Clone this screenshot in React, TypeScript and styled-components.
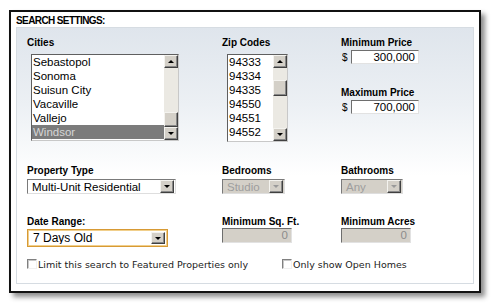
import React from "react";
import styled, { createGlobalStyle } from "styled-components";

const GlobalStyle = createGlobalStyle`
  html, body { margin: 0; padding: 0; background: #fff; }
  body { font-family: "Liberation Sans", Arial, sans-serif; }
`;

const Page = styled.div`
  width: 498px;
  height: 303px;
  padding: 10px 0 0 9px;
  box-sizing: border-box;
`;

const Frame = styled.div`
  width: 472px;
  height: 283px;
  box-sizing: border-box;
  border: 2px solid #111;
  background: #fff;
  box-shadow: 4px 4px 5px rgba(0, 0, 0, 0.45);
  padding: 0 5px 7px 5px;
  display: flex;
  flex-direction: column;
`;

const Title = styled.div`
  padding-top: 3px;
  font-size: 10px;
  line-height: 12px;
  font-weight: bold;
  letter-spacing: -0.6px;
  color: #000;
`;

const Panel = styled.div`
  flex: 1;
  border: 1px solid #d6dce2;
  background: linear-gradient(to bottom, #dfe5ec 0%, #ecf0f4 30%, #ffffff 58%);
  padding: 9px 0 0 10px;
`;

const Row = styled.div<{ mt?: number }>`
  display: grid;
  grid-template-columns: 195px 119px 1fr;
  align-items: start;
  margin-top: ${(p) => p.mt || 0}px;
`;

const Field = styled.div`
  display: flex;
  flex-direction: column;
  align-items: flex-start;
`;

const Label = styled.div<{ mt?: number }>`
  font-size: 10px;
  line-height: 12px;
  font-weight: bold;
  color: #000;
  margin-top: ${(p) => p.mt || 0}px;
`;

/* ---------- list box ---------- */

const ListBox = styled.div<{ w: number; h: number; ml: number; mt: number }>`
  width: ${(p) => p.w}px;
  height: ${(p) => p.h}px;
  margin: ${(p) => p.mt}px 0 0 ${(p) => p.ml}px;
  box-sizing: border-box;
  border: 1px solid;
  border-color: #5f5f5f #c8c8c8 #c8c8c8 #5f5f5f;
  background: #fff;
  display: flex;
  overflow: hidden;
`;

const Items = styled.div`
  flex: 1;
  overflow: hidden;
`;

const Item = styled.div<{ selected?: boolean }>`
  font-size: 11.5px;
  line-height: 14px;
  height: 14px;
  padding-left: 1px;
  white-space: nowrap;
  color: ${(p) => (p.selected ? "#d6d6d6" : "#000")};
  background: ${(p) => (p.selected ? "#7b7b7b" : "transparent")};
`;

const ScrollBar = styled.div`
  width: 14px;
  display: flex;
  flex-direction: column;
  background: #ebe9e3;
`;

const Btn3D = styled.div<{ w?: number; h?: number }>`
  width: ${(p) => p.w || 14}px;
  height: ${(p) => p.h || 13}px;
  flex: none;
  box-sizing: border-box;
  background: #d4d0c8;
  border: 1px solid;
  border-color: #f4f3ef #404040 #404040 #f4f3ef;
  box-shadow: inset -1px -1px #888;
  display: flex;
  align-items: center;
  justify-content: center;
`;

const Arrow = styled.div<{ up?: boolean; color?: string }>`
  width: 0;
  height: 0;
  border-left: 3px solid transparent;
  border-right: 3px solid transparent;
  ${(p) =>
    p.up
      ? `border-bottom: 3px solid ${p.color || "#000"};`
      : `border-top: 3px solid ${p.color || "#000"};`}
  margin-left: -1px;
`;

const Track = styled.div`
  flex: 1;
`;

const Thumb = styled(Btn3D)<{ top: number }>`
  margin-top: ${(p) => p.top}px;
`;

const List = ({
  items,
  selected,
  w,
  h,
  ml,
  thumbTop,
  thumbH,
}: {
  items: string[];
  selected?: string;
  w: number;
  h: number;
  ml: number;
  thumbTop: number;
  thumbH: number;
}) => (
  <ListBox w={w} h={h} ml={ml} mt={5}>
    <Items>
      {items.map((it) => (
        <Item key={it} selected={it === selected}>
          {it}
        </Item>
      ))}
    </Items>
    <ScrollBar>
      <Btn3D>
        <Arrow up />
      </Btn3D>
      <Track>
        <Thumb top={thumbTop} h={thumbH} />
      </Track>
      <Btn3D>
        <Arrow />
      </Btn3D>
    </ScrollBar>
  </ListBox>
);

/* ---------- select / input ---------- */

const SelectBox = styled.div<{ w: number; h: number; mt?: number; disabled?: boolean; focused?: boolean }>`
  width: ${(p) => p.w}px;
  height: ${(p) => p.h}px;
  margin-top: ${(p) => p.mt || 0}px;
  box-sizing: border-box;
  display: flex;
  align-items: center;
  background: ${(p) => (p.disabled ? "#d4d0c8" : "#fff")};
  border: 1px solid;
  border-color: ${(p) => (p.focused ? "#d79a35" : "#7a7a7a #dedede #dedede #7a7a7a")};
  box-shadow: ${(p) => (p.focused ? "inset 0 0 0 1px #f1cf8b" : "none")};
  padding: ${(p) => (p.focused ? "2px" : "1px")};
`;

const SelectText = styled.div<{ disabled?: boolean; size?: number }>`
  flex: 1;
  padding-left: 3px;
  font-size: ${(p) => p.size || 11.5}px;
  line-height: 12px;
  white-space: nowrap;
  overflow: hidden;
  color: ${(p) => (p.disabled ? "#9d9d9d" : "#000")};
`;

const Select = ({
  value,
  w,
  h = 15,
  mt,
  disabled,
  focused,
  size,
}: {
  value: string;
  w: number;
  h?: number;
  mt?: number;
  disabled?: boolean;
  focused?: boolean;
  size?: number;
}) => (
  <SelectBox w={w} h={h} mt={mt} disabled={disabled} focused={focused}>
    <SelectText disabled={disabled} size={size}>
      {value}
    </SelectText>
    <Btn3D w={14} h={h - (focused ? 6 : 2)}>
      <Arrow color={disabled ? "#9a9a9a" : "#000"} />
    </Btn3D>
  </SelectBox>
);

const Input = styled.div<{ w: number; h: number; disabled?: boolean }>`
  width: ${(p) => p.w}px;
  height: ${(p) => p.h}px;
  box-sizing: border-box;
  border: 1px solid;
  border-color: #6e6e6e #e2e2e2 #e2e2e2 #6e6e6e;
  background: ${(p) => (p.disabled ? "#d4d0c8" : "#fff")};
  color: ${(p) => (p.disabled ? "#8c8c8c" : "#000")};
  font-size: 11.5px;
  line-height: ${(p) => p.h - 2}px;
  text-align: right;
  padding-right: 3px;
`;

const PriceRow = styled.div`
  display: flex;
  align-items: center;
  gap: 3px;
  margin-top: 1px;
  padding-left: 1px;
`;

const Dollar = styled.span`
  font-size: 10px;
  width: 6px;
`;

/* ---------- checkboxes ---------- */

const CheckRow = styled.div`
  display: grid;
  grid-template-columns: 255px auto;
  margin-top: 11px;
`;

const Check = styled.label`
  display: flex;
  align-items: flex-start;
  height: 14px;
  font-family: "DejaVu Sans", Verdana, sans-serif;
  font-size: 9.5px;
  line-height: 14px;
  color: #222;
`;

const Box = styled.span`
  width: 10px;
  height: 10px;
  margin-top: 1px;
  margin-right: 1px;
  box-sizing: border-box;
  border: 1px solid;
  border-color: #808080 #f0f0f0 #f0f0f0 #808080;
  background: #fff;
  box-shadow: inset 1px 1px #c8c8c8;
`;

const cities = ["Sebastopol", "Sonoma", "Suisun City", "Vacaville", "Vallejo", "Windsor"];
const zips = ["94333", "94334", "94335", "94550", "94551", "94552"];

export default function App() {
  return (
    <>
      <GlobalStyle />
      <Page>
        <Frame>
          <Title>SEARCH SETTINGS:</Title>
          <Panel>
            <Row>
              <Field>
                <Label>Cities</Label>
                <List items={cities} selected="Windsor" w={148} h={87} ml={4} thumbTop={44} thumbH={15} />
              </Field>
              <Field>
                <Label>Zip Codes</Label>
                <List items={zips} w={61} h={88} ml={5} thumbTop={12} thumbH={16} />
              </Field>
              <Field>
                <Label>Minimum Price</Label>
                <PriceRow>
                  <Dollar>$</Dollar>
                  <Input w={68} h={14}>300,000</Input>
                </PriceRow>
                <Label mt={23}>Maximum Price</Label>
                <PriceRow>
                  <Dollar>$</Dollar>
                  <Input w={68} h={14}>700,000</Input>
                </PriceRow>
              </Field>
            </Row>

            <Row mt={23}>
              <Field>
                <Label>Property Type</Label>
                <Select value="Multi-Unit Residential" w={149} mt={2} />
              </Field>
              <Field>
                <Label>Bedrooms</Label>
                <Select value="Studio" w={63} mt={2} disabled />
              </Field>
              <Field>
                <Label>Bathrooms</Label>
                <Select value="Any" w={62} mt={2} disabled />
              </Field>
            </Row>

            <Row mt={22}>
              <Field>
                <Label>Date Range:</Label>
                <Select value="7 Days Old" w={141} h={18} mt={1} focused size={12} />
              </Field>
              <Field>
                <Label>Minimum Sq. Ft.</Label>
                <Input w={70} h={15} disabled>
                  0
                </Input>
              </Field>
              <Field>
                <Label>Minimum Acres</Label>
                <Input w={70} h={15} disabled>
                  0
                </Input>
              </Field>
            </Row>

            <CheckRow>
              <Check>
                <Box />
                Limit this search to Featured Properties only
              </Check>
              <Check>
                <Box />
                Only show Open Homes
              </Check>
            </CheckRow>
          </Panel>
        </Frame>
      </Page>
    </>
  );
}
